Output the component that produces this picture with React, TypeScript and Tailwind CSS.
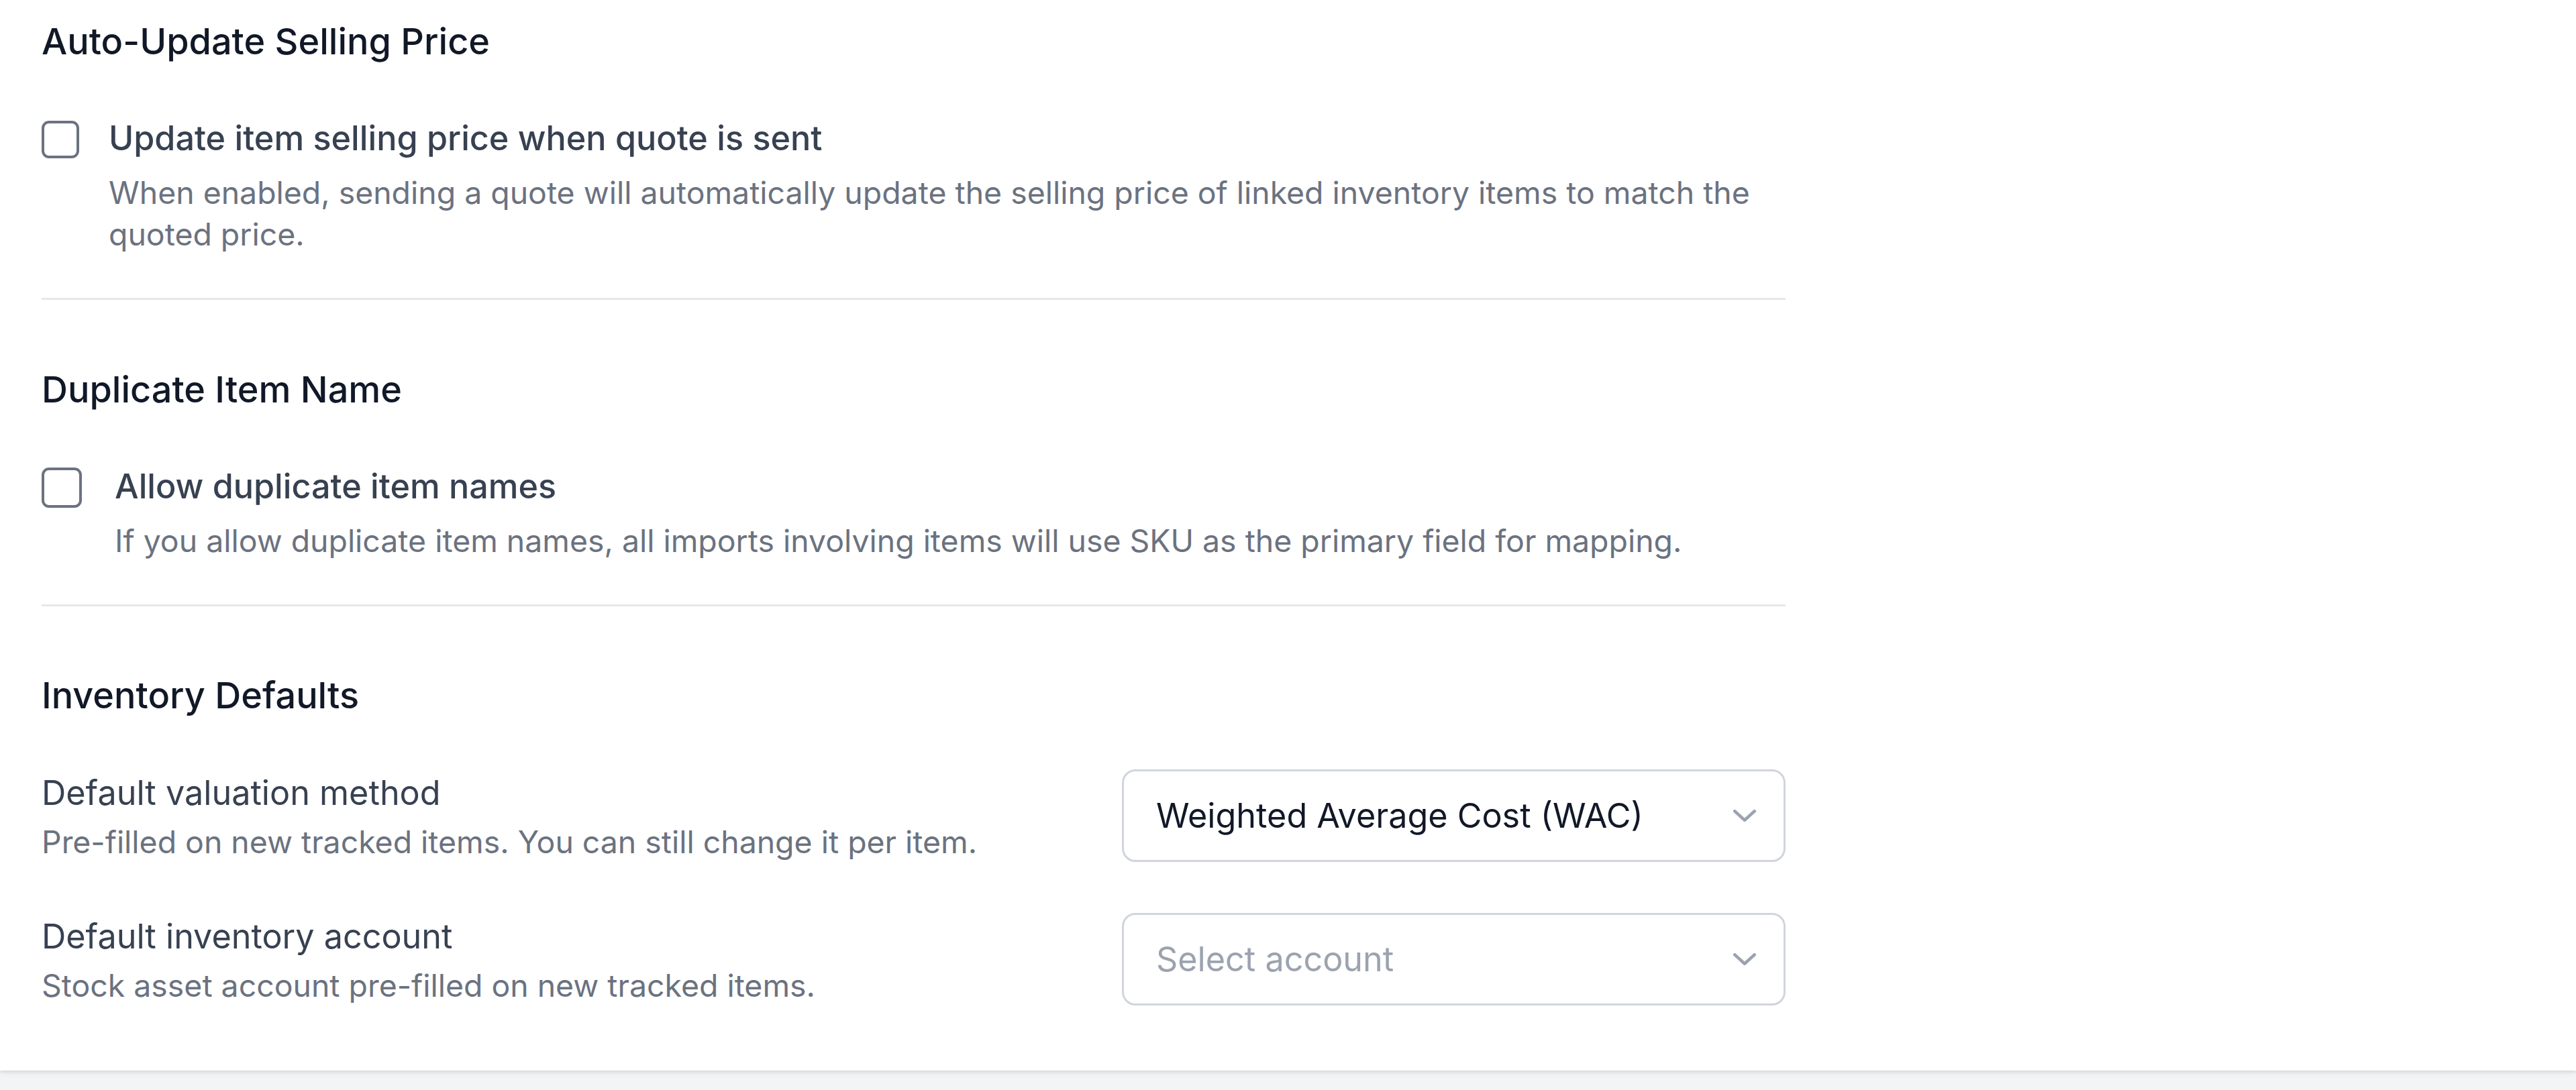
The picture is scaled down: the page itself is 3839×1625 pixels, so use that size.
import React from "react";

function Checkbox({ size, offset }: { size: "sm" | "lg"; offset: "sm" | "lg" }) {
  return (
    <span
      className={
        "block shrink-0 rounded-[11px] border-[4px] border-[#6b7280] bg-white " +
        (size === "sm" ? "h-[56px] w-[56px] " : "h-[60px] w-[60px] ") +
        (offset === "sm" ? "mt-[9px]" : "mt-[7px]")
      }
    />
  );
}

function Chevron() {
  return (
    <svg width="34" height="18" viewBox="0 0 34 18" fill="none" className="shrink-0">
      <path
        d="M2.25 2.25 L17 15.75 L31.75 2.25"
        stroke="#9ca3af"
        strokeWidth="4.5"
        strokeLinecap="round"
        strokeLinejoin="round"
      />
    </svg>
  );
}

function SelectBox({ value, placeholder }: { value?: string; placeholder: string }) {
  return (
    <div className="flex h-[138px] w-[989px] shrink-0 items-center justify-between rounded-[20px] border-[3px] border-[#d1d5db] bg-white pl-[48px] pr-[41px]">
      <span
        className={
          "text-[50.3px] leading-[70px] " + (value ? "text-[#111827]" : "text-[#9ca3af]")
        }
      >
        {value ?? placeholder}
      </span>
      <Chevron />
    </div>
  );
}

function Divider() {
  return <div className="h-[3px] bg-[#e5e7eb]" />;
}

export default function App() {
  return (
    <div className="min-h-screen bg-[#f3f4f6] font-['Inter',sans-serif]">
      <div className="bg-white pb-[96px] pl-[62px] pt-[23px] shadow-[0_3px_4px_rgba(0,0,0,0.08),0_4px_12px_rgba(0,0,0,0.04)]">
        <div className="w-[2599px]">
          {/* Auto-update selling price */}
          <section>
            <h2 className="text-[54px] font-medium leading-[77px] text-[#111827]">
              Auto-Update Selling Price
            </h2>
            <div className="mt-[71px] flex items-start gap-[44px]">
              <Checkbox size="sm" offset="sm" />
              <div>
                <p className="text-[50.3px] font-medium leading-[70px] text-[#374151]">
                  Update item selling price when quote is sent
                </p>
                <p className="mt-[15px] text-[46.4px] leading-[62px] text-[#6b7280]">
                  When enabled, sending a quote will automatically update the selling price of
                  linked inventory items to match the quoted price.
                </p>
              </div>
            </div>
            <div className="mt-[64px]">
              <Divider />
            </div>
          </section>

          {/* Duplicate item name */}
          <section className="mt-[95px]">
            <h2 className="text-[54px] font-medium leading-[77px] text-[#111827]">
              Duplicate Item Name
            </h2>
            <div className="mt-[71px] flex items-start gap-[49px]">
              <Checkbox size="lg" offset="lg" />
              <div>
                <p className="text-[50.3px] font-medium leading-[70px] text-[#374151]">
                  Allow duplicate item names
                </p>
                <p className="mt-[15px] text-[46.4px] leading-[62px] text-[#6b7280]">
                  If you allow duplicate item names, all imports involving items will use SKU as
                  the primary field for mapping.
                </p>
              </div>
            </div>
            <div className="mt-[64px]">
              <Divider />
            </div>
          </section>

          {/* Inventory defaults */}
          <section className="mt-[94px]">
            <h2 className="text-[54px] font-medium leading-[77px] text-[#111827]">
              Inventory Defaults
            </h2>
            <div className="mt-[72px] flex items-start justify-between">
              <div>
                <p className="text-[50.3px] leading-[70px] text-[#374151]">
                  Default valuation method
                </p>
                <p className="mt-[7px] text-[46.4px] leading-[62px] text-[#6b7280]">
                  Pre-filled on new tracked items. You can still change it per item.
                </p>
              </div>
              <SelectBox value="Weighted Average Cost (WAC)" placeholder="Select method" />
            </div>
            <div className="mt-[75px] flex items-start justify-between">
              <div>
                <p className="text-[50.3px] leading-[70px] text-[#374151]">
                  Default inventory account
                </p>
                <p className="mt-[7px] text-[46.4px] leading-[62px] text-[#6b7280]">
                  Stock asset account pre-filled on new tracked items.
                </p>
              </div>
              <SelectBox placeholder="Select account" />
            </div>
          </section>
        </div>
      </div>
    </div>
  );
}
